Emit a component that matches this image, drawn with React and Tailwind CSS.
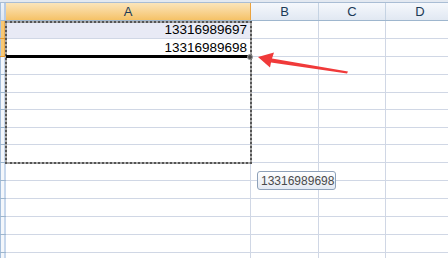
import React from "react";

const rowHeights = [18, 18, 18, 18, 17, 18, 17, 18, 18, 18, 18, 18, 18, 18];

function RowHead({ selected, tall }) {
  return (
    <div
      className={`${tall ? "h-[18px]" : "h-[17px]"} w-[6px] shrink-0 flex border-b ${
        selected ? "border-[#e39a35] bg-[#f7c874]" : "border-[#9eb6ce] bg-[#f4f7fb]"
      }`}
    >
      <div className="w-[1px] bg-[#a6bfdc]" />
      <div className="flex-1" />
      <div className={`w-[2px] ${selected ? "bg-[#eeac4c]" : "bg-[#c7d7ec]"}`} />
    </div>
  );
}

function Cell({ w, children, shaded, last }) {
  return (
    <div
      className={`${w} shrink-0 h-full border-b border-[#d0d7e5] ${last ? "" : "border-r"} ${
        shaded ? "bg-[#e8eaf5]" : "bg-white"
      } flex items-center justify-end pr-[3px] text-[13.5px] leading-none text-black`}
    >
      {children}
    </div>
  );
}

export default function App() {
  return (
    <div className="relative w-[448px] h-[258px] overflow-hidden bg-white font-['Liberation_Sans',Arial,sans-serif]">
      {/* strip above the column headings */}
      <div className="h-[2px] bg-[#e3e9f1]" />
      <div className="h-[1px] bg-[#a9bdd4]" />

      {/* column headings */}
      <div className="flex h-[18px] border-b border-[#9eb6ce]">
        <div className="w-[6px] shrink-0 flex bg-gradient-to-b from-[#eef3fa] to-[#dde6f1]">
          <div className="w-[1px] bg-[#a6bfdc]" />
          <div className="flex-1" />
          <div className="w-[2px] bg-[#b7cbe4]" />
        </div>
        <div className="w-[245px] shrink-0 flex items-center justify-center border-r border-[#eaa33f] bg-gradient-to-b from-[#fbe5ba] to-[#f5c266] text-[13px] text-[#1b3a56]">
          A
        </div>
        <div className="w-[68px] shrink-0 flex items-center justify-center border-r border-[#c5d3e3] bg-gradient-to-b from-[#f5f8fc] to-[#e1e8f2] text-[13px] text-[#1b3a56]">
          B
        </div>
        <div className="w-[67px] shrink-0 flex items-center justify-center border-r border-[#c5d3e3] bg-gradient-to-b from-[#f5f8fc] to-[#e1e8f2] text-[13px] text-[#1b3a56]">
          C
        </div>
        <div className="w-[69px] shrink-0 flex items-center justify-center border-r border-[#c5d3e3] bg-gradient-to-b from-[#f5f8fc] to-[#e1e8f2] text-[13px] text-[#1b3a56]">
          D
        </div>
      </div>

      {/* worksheet rows */}
      {rowHeights.map((h, i) => (
        <div key={i} className={`flex ${h === 18 ? "h-[18px]" : "h-[17px]"}`}>
          <RowHead selected={i < 2} tall={h === 18} />
          <Cell w="w-[245px]" shaded={i === 0}>
            {i === 0 ? "13316989697" : i === 1 ? "13316989698" : null}
          </Cell>
          <Cell w="w-[68px]" />
          <Cell w="w-[67px]" />
          <Cell w="w-[69px]" />
        </div>
      ))}

      {/* copy marquee around A1:A8: light base with dark dots on top */}
      <div className="absolute left-[5px] top-[21px] w-[247px] h-[143px] border-2 border-solid border-[#a8a8a8]" />
      <div className="absolute left-[5px] top-[21px] w-[247px] h-[143px] border-2 border-dotted border-[#555555]" />

      {/* bold bottom edge of the active cell */}
      <div className="absolute left-[6px] top-[55px] w-[245px] h-[3px] bg-black" />

      {/* fill handle */}
      <div className="absolute left-[247px] top-[54px] w-[6px] h-[6px] rounded-full bg-[#4d4d4d] border border-[#9a9a9a]" />

      {/* paste preview tooltip */}
      <div className="absolute left-[257px] top-[171px] w-[79px] h-[19px] rounded-[3px] border border-[#8ea1b9] bg-gradient-to-b from-white to-[#e3e9f3] flex items-center pl-[3px] text-[12px] text-[#4a4a4a] leading-none">
        13316989698
      </div>

      {/* red pointer arrow */}
      <svg className="absolute left-0 top-0" width="448" height="258" viewBox="0 0 448 258">
        <polygon
          points="258,57 274,52.5 272,58.6 348,71.6 347,73.6 271,62.6 270,67.5"
          fill="#f03a3a"
        />
      </svg>
    </div>
  );
}
